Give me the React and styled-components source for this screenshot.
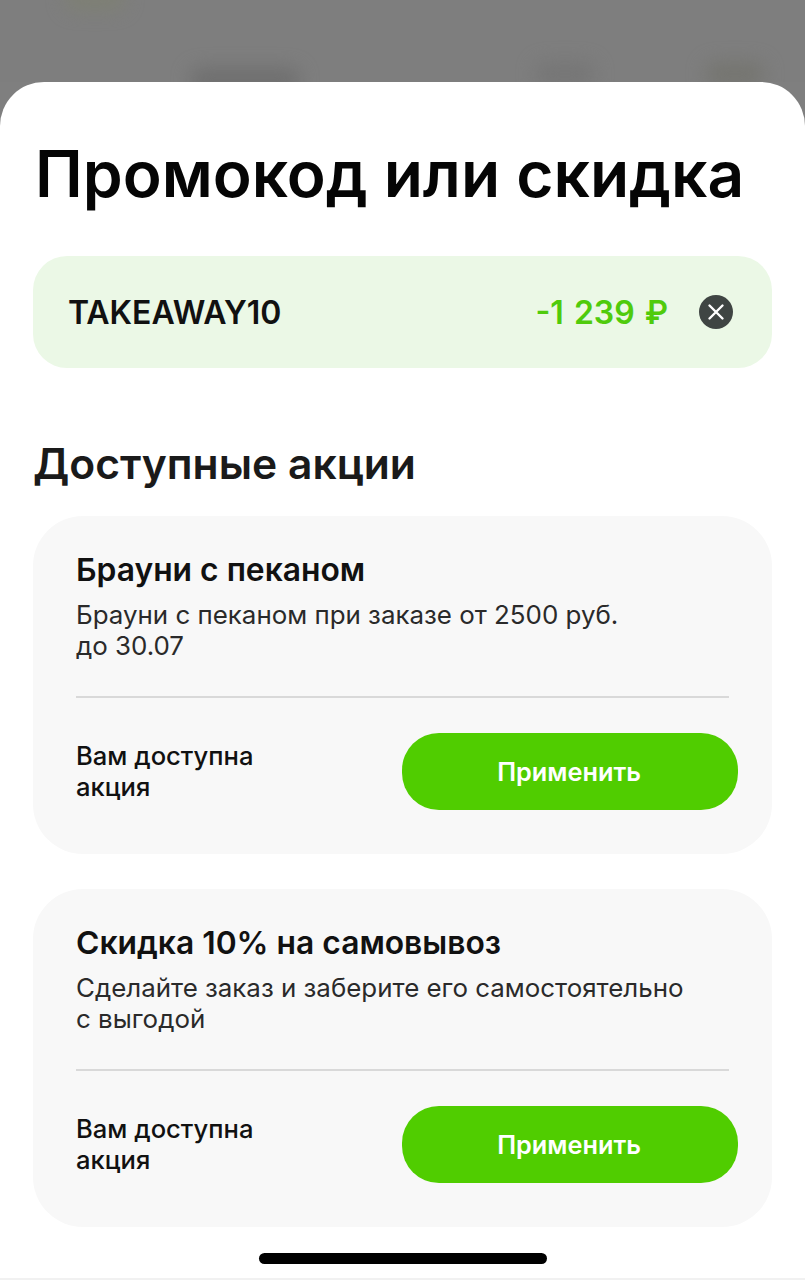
import React from 'react';
import styled, { createGlobalStyle } from 'styled-components';

const promos = [
  {
    title: 'Брауни с пеканом',
    lines: ['Брауни с пеканом при заказе от 2500 руб.', 'до 30.07'],
  },
  {
    title: 'Скидка 10% на самовывоз',
    lines: ['Сделайте заказ и заберите его самостоятельно', 'с выгодой'],
  },
];

export default function App() {
  return (
    <>
      <GlobalStyle />
      <Screen>
        <Backdrop>
          <Smudge $width={60} $left={65} $top={-14} $color="#7e8074" />
          <Smudge $width={110} $left={190} $top={68} $color="#6f6f6f" />
          <Smudge $width={60} $left={535} $top={62} $color="#767676" />
          <Smudge $width={60} $left={705} $top={62} $color="#757570" />
        </Backdrop>
        <Sheet>
          <Title>Промокод или скидка</Title>
          <AppliedCode>
            <CodeName>TAKEAWAY10</CodeName>
            <Amount>-1 239 ₽</Amount>
            <ClearButton aria-label="Удалить промокод">
              <svg width="34" height="34" viewBox="0 0 34 34">
                <circle cx="17" cy="17" r="17" fill="#3f4543" />
                <path
                  d="M10.5 10.5l13 13M23.5 10.5l-13 13"
                  stroke="#fff"
                  strokeWidth="2.4"
                  strokeLinecap="round"
                />
              </svg>
            </ClearButton>
          </AppliedCode>
          <SectionTitle>Доступные акции</SectionTitle>
          <PromoList>
            {promos.map((promo) => (
              <PromoCard key={promo.title}>
                <PromoTitle>{promo.title}</PromoTitle>
                <PromoText>
                  {promo.lines.map((line) => (
                    <span key={line}>{line}</span>
                  ))}
                </PromoText>
                <Divider />
                <PromoFooter>
                  <Availability>
                    Вам доступна
                    <br />
                    акция
                  </Availability>
                  <ApplyButton>Применить</ApplyButton>
                </PromoFooter>
              </PromoCard>
            ))}
          </PromoList>
          <HomeIndicator />
        </Sheet>
      </Screen>
    </>
  );
}

const GlobalStyle = createGlobalStyle`
  html, body {
    margin: 0;
    padding: 0;
    background: #fff;
  }
  body {
    font-family: Inter, "Noto Sans", sans-serif;
    color: #111;
  }
`;

const Screen = styled.div`
  width: 805px;
  height: 1280px;
  overflow: hidden;
  display: flex;
  flex-direction: column;
  background: #7f7f7f;
`;

const Backdrop = styled.div`
  position: relative;
  height: 82px;
  flex: none;
  background: #7e7e7e;
  overflow: hidden;
`;

const Smudge = styled.div`
  position: absolute;
  left: ${(p) => p.$left}px;
  top: ${(p) => p.$top}px;
  width: ${(p) => p.$width}px;
  height: 24px;
  border-radius: 12px;
  background: ${(p) => p.$color};
  filter: blur(9px);
`;

const Sheet = styled.div`
  flex: 1;
  display: flex;
  flex-direction: column;
  align-items: stretch;
  padding: 0 33px;
  background: #fff;
  border-radius: 44px 44px 0 0;
  border-bottom: 2px solid #f1f1f1;
`;

const Title = styled.h1`
  margin: 49px 0 1px 2px;
  font-size: 64px;
  line-height: 86px;
  font-weight: 600;
  color: #050505;
  white-space: nowrap;
`;

const AppliedCode = styled.div`
  display: flex;
  align-items: center;
  height: 112px;
  margin-top: 38px;
  padding: 0 39px 0 35px;
  background: #ebf8e6;
  border-radius: 34px;
`;

const CodeName = styled.span`
  flex: 1;
  font-size: 32px;
  font-weight: 600;
  color: #111;
`;

const Amount = styled.span`
  font-size: 32px;
  font-weight: 600;
  word-spacing: 2px;
  color: #4fcb0c;
`;

const ClearButton = styled.button`
  display: flex;
  margin-left: 31px;
  padding: 0;
  border: 0;
  background: none;
`;

const SectionTitle = styled.h2`
  margin: 69px 0 0;
  font-size: 42.6px;
  line-height: 54px;
  font-weight: 600;
  color: #1a1a1a;
`;

const PromoList = styled.div`
  display: flex;
  flex-direction: column;
  gap: 35px;
  margin-top: 25px;
`;

const PromoCard = styled.section`
  height: 338px;
  box-sizing: border-box;
  padding: 35px 34px 0 43px;
  background: #f8f8f8;
  border-radius: 50px;
`;

const PromoTitle = styled.h3`
  margin: 0;
  font-size: 31.8px;
  line-height: 38px;
  font-weight: 600;
  color: #111;
`;

const PromoText = styled.p`
  display: flex;
  flex-direction: column;
  margin: 10px 0 0;
  font-size: 25.9px;
  line-height: 31px;
  color: #2a2a2a;
`;

const Divider = styled.hr`
  width: 653px;
  margin: 35px 0 0;
  border: 0;
  border-top: 2px solid #d9d9d9;
`;

const PromoFooter = styled.div`
  display: flex;
  align-items: center;
  justify-content: space-between;
  margin-top: 35px;
`;

const Availability = styled.div`
  margin-bottom: 2px;
  font-size: 25.6px;
  line-height: 31px;
  font-weight: 500;
  color: #111;
`;

const ApplyButton = styled.button`
  width: 336px;
  height: 77px;
  padding: 0 2px 0 0;
  border: 0;
  border-radius: 37px;
  background: #50cd00;
  color: #fff;
  font-family: inherit;
  font-size: 25.3px;
  font-weight: 600;
`;

const HomeIndicator = styled.div`
  align-self: center;
  width: 288px;
  height: 11px;
  margin-top: 26px;
  border-radius: 6px;
  background: #000;
`;
